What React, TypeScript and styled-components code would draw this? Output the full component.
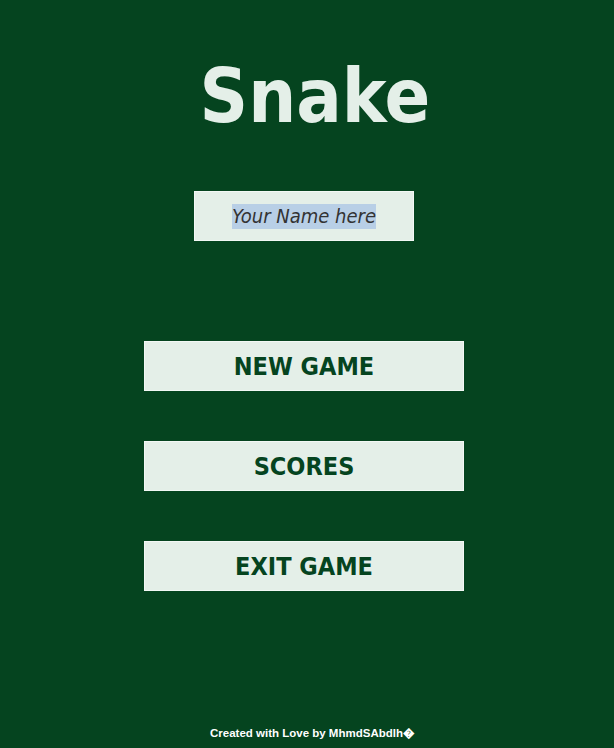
import React from "react";
import styled, { createGlobalStyle } from "styled-components";

const Global = createGlobalStyle`
  html, body { margin: 0; padding: 0; }
  body { background: #05441f; font-family: "DejaVu Sans", Verdana, sans-serif; }
`;

const Page = styled.div`
  width: 614px;
  height: 748px;
  background: #05441f;
  display: flex;
  flex-direction: column;
  align-items: center;
  box-sizing: border-box;
  padding: 50px 6px 0 0;
`;

const Title = styled.h1`
  margin: 0;
  padding-left: 22px;
  font-family: "DejaVu Sans Condensed", "DejaVu Sans", sans-serif;
  font-weight: bold;
  font-size: 75px;
  line-height: 92px;
  color: #e4efe8;
`;

const NameBox = styled.div`
  margin-top: 49px;
  width: 220px;
  height: 50px;
  box-sizing: border-box;
  background: #e4efe8;
  border: 1px solid #f3f8f5;
  display: flex;
  align-items: center;
  justify-content: center;
`;

const Selected = styled.span`
  font-family: "DejaVu Sans Condensed", "DejaVu Sans", sans-serif;
  font-style: italic;
  font-size: 20px;
  line-height: 25px;
  color: #333;
  background: #b8cfe6;
`;

const Menu = styled.div`
  margin-top: 100px;
  display: flex;
  flex-direction: column;
  gap: 50px;
`;

const MenuButton = styled.button`
  width: 320px;
  height: 50px;
  box-sizing: border-box;
  background: #e4efe8;
  border: 1px solid #f3f8f5;
  color: #05441f;
  font-family: "DejaVu Sans Condensed", "DejaVu Sans", sans-serif;
  font-weight: bold;
  font-size: 25px;
  padding: 0;
  cursor: pointer;
`;

const Footer = styled.div`
  margin-top: auto;
  margin-bottom: 8px;
  padding-left: 17px;
  font-family: "Liberation Sans", Arial, sans-serif;
  font-weight: bold;
  font-size: 11.5px;
  color: #ffffff;
`;

export default function App() {
  return (
    <>
      <Global />
      <Page>
        <Title>Snake</Title>
        <NameBox>
          <Selected>Your Name here</Selected>
        </NameBox>
        <Menu>
          <MenuButton>NEW GAME</MenuButton>
          <MenuButton>SCORES</MenuButton>
          <MenuButton>EXIT GAME</MenuButton>
        </Menu>
        <Footer>Created with Love by MhmdSAbdlh{"\uFFFD"}</Footer>
      </Page>
    </>
  );
}
